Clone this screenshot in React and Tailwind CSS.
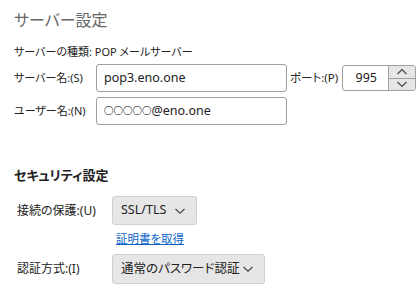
import React from 'react';

const FONT = { fontFamily: '"Noto Sans", "Noto Sans CJK JP", sans-serif' };

function Chevron() {
  return (
    <svg className="h-[10px] w-[12px] shrink-0" viewBox="0 0 12 10" fill="none" stroke="#444" strokeWidth="1.1">
      <path d="M1.5 3 L6 7.2 L10.5 3" />
    </svg>
  );
}

function Select({ label, width, height }) {
  return (
    <div className={`flex ${height} ${width} items-center justify-between whitespace-nowrap rounded-[3px] border border-[#d0d0d0] bg-[#e6e6e6] pl-[8px] pr-[10px] text-[12.5px] text-[#222]`}>
      <span>{label}</span>
      <Chevron />
    </div>
  );
}

export default function App() {
  return (
    <div className="h-[300px] w-[420px] overflow-hidden whitespace-nowrap bg-white text-[#222] [font-feature-settings:'palt']" style={FONT}>
      <div className="pl-[14px] pt-[9px]">
        <div className="h-[22px] text-[16px] leading-[22px] text-[#666]">サーバー設定</div>
        <div className="mt-[12px] h-[18px] text-[11px] leading-[18px]">サーバーの種類: POP メールサーバー</div>

        <div className="mt-[3px] flex h-[28px] items-center">
          <span className="w-[82px] text-[11px]">サーバー名:(S)</span>
          <div className="flex h-[28px] w-[191px] items-center rounded-[3px] border border-[#a0a0a0] px-[7px] text-[12.5px]">pop3.eno.one</div>
          <span className="ml-[3px] w-[52px] text-[11.5px]">ポート:(P)</span>
          <div className="flex h-[26px] w-[74px] items-stretch overflow-hidden rounded-[3px] border border-[#a0a0a0]">
            <div className="flex flex-1 items-center justify-end pr-[11px] text-[12.5px]">995</div>
            <div className="flex w-[27px] flex-col border-l border-[#a0a0a0] bg-[#e6e6e6]">
              <div className="flex flex-1 items-center justify-center border-b border-[#a0a0a0]">
                <svg className="h-[7px] w-[12px]" viewBox="0 0 12 7" fill="none" stroke="#444" strokeWidth="1.1"><path d="M1.5 6 L6 1.5 L10.5 6" /></svg>
              </div>
              <div className="flex flex-1 items-center justify-center">
                <svg className="h-[7px] w-[12px]" viewBox="0 0 12 7" fill="none" stroke="#444" strokeWidth="1.1"><path d="M1.5 1 L6 5.5 L10.5 1" /></svg>
              </div>
            </div>
          </div>
        </div>

        <div className="mt-[5px] flex h-[28px] items-center">
          <span className="w-[82px] text-[11px]">ユーザー名:(N)</span>
          <div className="flex h-[28px] w-[191px] items-center rounded-[3px] border border-[#a0a0a0] px-[7px] text-[12.5px]">
            <span className="text-[9.5px] font-bold text-[#000]">○○○○○</span>@eno.one
          </div>
        </div>

        <div className="mt-[40px] h-[20px] text-[13px] font-bold leading-[20px]">セキュリティ設定</div>

        <div className="mt-[11px] flex items-center pl-[3px]">
          <span className="w-[95px] text-[12px]">接続の保護:(U)</span>
          <Select label="SSL/TLS" width="w-[85px]" height="h-[29px]" />
        </div>
        <div className="ml-[102px] mt-[6px] h-[16px] text-[11.5px] leading-[16px] text-[#0a64c8] underline">証明書を取得</div>
        <div className="mt-[7px] flex items-center pl-[3px]">
          <span className="w-[95px] text-[12px]">認証方式:(I)</span>
          <Select label="通常のパスワード認証" width="w-[153px]" height="h-[30px]" />
        </div>
      </div>
    </div>
  );
}
